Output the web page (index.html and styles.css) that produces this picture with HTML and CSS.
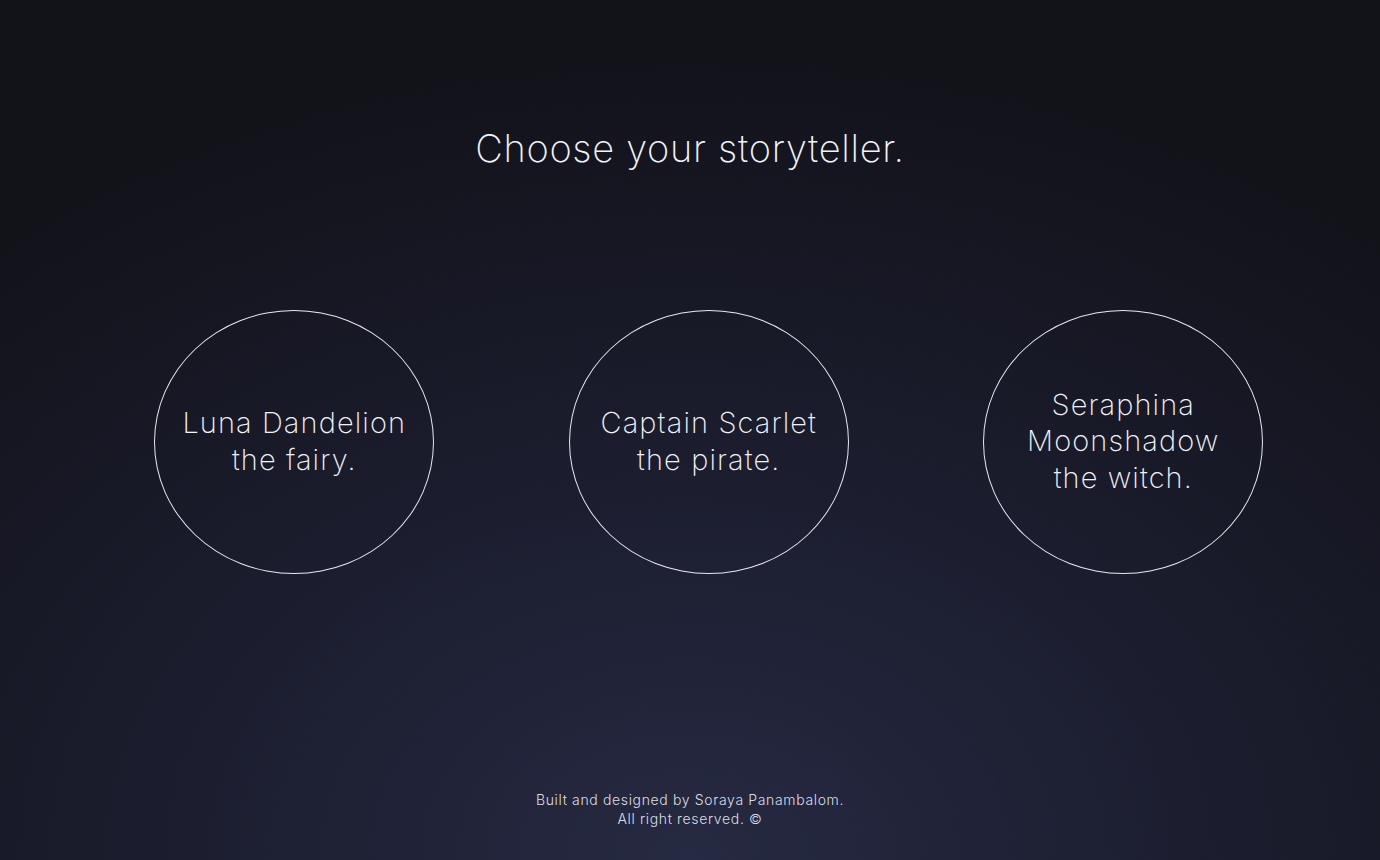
FILE: index.html
```html
<!DOCTYPE html>
<html lang="en">
<head>
<meta charset="utf-8">
<title>Choose your storyteller</title>
<link rel="stylesheet" href="styles.css">
</head>
<body>
<main class="page">
  <h1 class="title">Choose your storyteller.</h1>
  <section class="tellers">
    <div class="cell"><button class="teller">Luna Dandelion<br>the fairy.</button></div>
    <div class="cell"><button class="teller">Captain Scarlet<br>the pirate.</button></div>
    <div class="cell"><button class="teller">Seraphina<br>Moonshadow<br>the witch.</button></div>
  </section>
  <footer class="footer">
    <p>Built and designed by Soraya Panambalom.</p>
    <p>All right reserved. &copy;</p>
  </footer>
</main>
</body>
</html>
```

FILE: styles.css
```css
html, body {
  margin: 0;
  padding: 0;
  height: 100%;
}
body {
  background: radial-gradient(ellipse 80% 95% at 50% 100%, #262a42 0%, #1c1e30 45%, #121219 100%);
  color: #f2f3f7;
  font-family: Inter, "Noto Sans", sans-serif;
  font-weight: 200;
}
.page {
  height: 860px;
  display: flex;
  flex-direction: column;
  align-items: stretch;
}
.title {
  margin: 124px 0 0;
  text-align: center;
  font-weight: 200;
  font-size: 38px;
  line-height: 48px;
  letter-spacing: 0.7px;
}
.tellers {
  margin-top: 138px;
  padding-left: 87px;
  display: flex;
}
.cell {
  width: 414.5px;
  display: flex;
  justify-content: center;
}
.teller {
  width: 280px;
  height: 264px;
  border-radius: 50%;
  border: 1px solid #e8e8ee;
  background: transparent;
  color: #f2f3f7;
  font-family: inherit;
  font-weight: 200;
  font-size: 29px;
  line-height: 36.5px;
  letter-spacing: 1.1px;
  text-align: center;
  cursor: pointer;
  padding: 0 0 1px;
}
.footer {
  margin-top: auto;
  margin-bottom: 32px;
  text-align: center;
  font-size: 14px;
  line-height: 19px;
  font-weight: 300;
  letter-spacing: 0.65px;
  color: #dcdee6;
}
.footer p {
  margin: 0;
}
```
